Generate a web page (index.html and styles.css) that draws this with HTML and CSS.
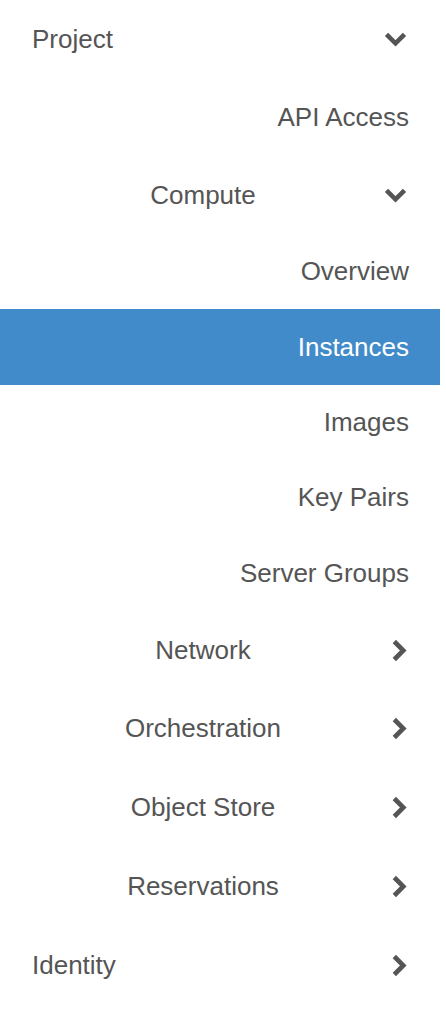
FILE: index.html
```html
<!DOCTYPE html>
<html>
<head>
<meta charset="utf-8">
<link rel="stylesheet" href="styles.css">
</head>
<body>
<nav class="sidenav">
  <div class="row head h78">
    <span class="label">Project</span>
    <span class="icon"><svg class="chev-down" width="23" height="14" viewBox="0 0 23 14"><polyline points="2.5,2.3 11.5,11.3 20.5,2.3"/></svg></span>
  </div>
  <div class="row leaf h78"><span class="label">API Access</span></div>
  <div class="row sub h78">
    <span class="label">Compute</span>
    <span class="icon"><svg class="chev-down" width="23" height="14" viewBox="0 0 23 14"><polyline points="2.5,2.3 11.5,11.3 20.5,2.3"/></svg></span>
  </div>
  <div class="row leaf h75"><span class="label">Overview</span></div>
  <div class="row leaf h76 active"><span class="label">Instances</span></div>
  <div class="row leaf h75"><span class="label">Images</span></div>
  <div class="row leaf h75"><span class="label">Key Pairs</span></div>
  <div class="row leaf h76"><span class="label">Server Groups</span></div>
  <div class="row sub h78">
    <span class="label">Network</span>
    <span class="icon"><svg class="chev-right" width="15" height="23" viewBox="0 0 15 23"><polyline points="2.3,2.5 11.3,11.5 2.3,20.5"/></svg></span>
  </div>
  <div class="row sub h79">
    <span class="label">Orchestration</span>
    <span class="icon"><svg class="chev-right" width="15" height="23" viewBox="0 0 15 23"><polyline points="2.3,2.5 11.3,11.5 2.3,20.5"/></svg></span>
  </div>
  <div class="row sub h79">
    <span class="label">Object Store</span>
    <span class="icon"><svg class="chev-right" width="15" height="23" viewBox="0 0 15 23"><polyline points="2.3,2.5 11.3,11.5 2.3,20.5"/></svg></span>
  </div>
  <div class="row sub h79">
    <span class="label">Reservations</span>
    <span class="icon"><svg class="chev-right" width="15" height="23" viewBox="0 0 15 23"><polyline points="2.3,2.5 11.3,11.5 2.3,20.5"/></svg></span>
  </div>
  <div class="row head h79">
    <span class="label">Identity</span>
    <span class="icon"><svg class="chev-right" width="15" height="23" viewBox="0 0 15 23"><polyline points="2.3,2.5 11.3,11.5 2.3,20.5"/></svg></span>
  </div>
</nav>
</body>
</html>
```

FILE: styles.css
```css
html, body {
  margin: 0;
  padding: 0;
  background: #ffffff;
}

body {
  font-family: "Liberation Sans", Arial, Helvetica, sans-serif;
  font-size: 26px;
  color: #555555;
}

.sidenav {
  width: 440px;
  display: flex;
  flex-direction: column;
}

.row {
  display: flex;
  align-items: center;
  box-sizing: border-box;
  padding: 0 33px 0 32px;
}

.h75 { height: 75px; }
.h76 { height: 76px; }
.h78 { height: 78px; }
.h79 { height: 79px; }

.label {
  flex: 1;
  white-space: nowrap;
}

.head .label { text-align: left; }
.sub .label { text-align: center; }
.leaf .label { text-align: right; }
.leaf { padding-right: 31px; }

.icon {
  width: 23px;
  margin-left: 10px;
  display: flex;
  justify-content: flex-end;
  align-items: center;
}

.icon svg {
  display: block;
  overflow: visible;
}

.icon polyline {
  fill: none;
  stroke: #555555;
  stroke-width: 4.6;
  stroke-linecap: butt;
  stroke-linejoin: miter;
}

.active {
  background: #428bca;
  color: #ffffff;
}
```
